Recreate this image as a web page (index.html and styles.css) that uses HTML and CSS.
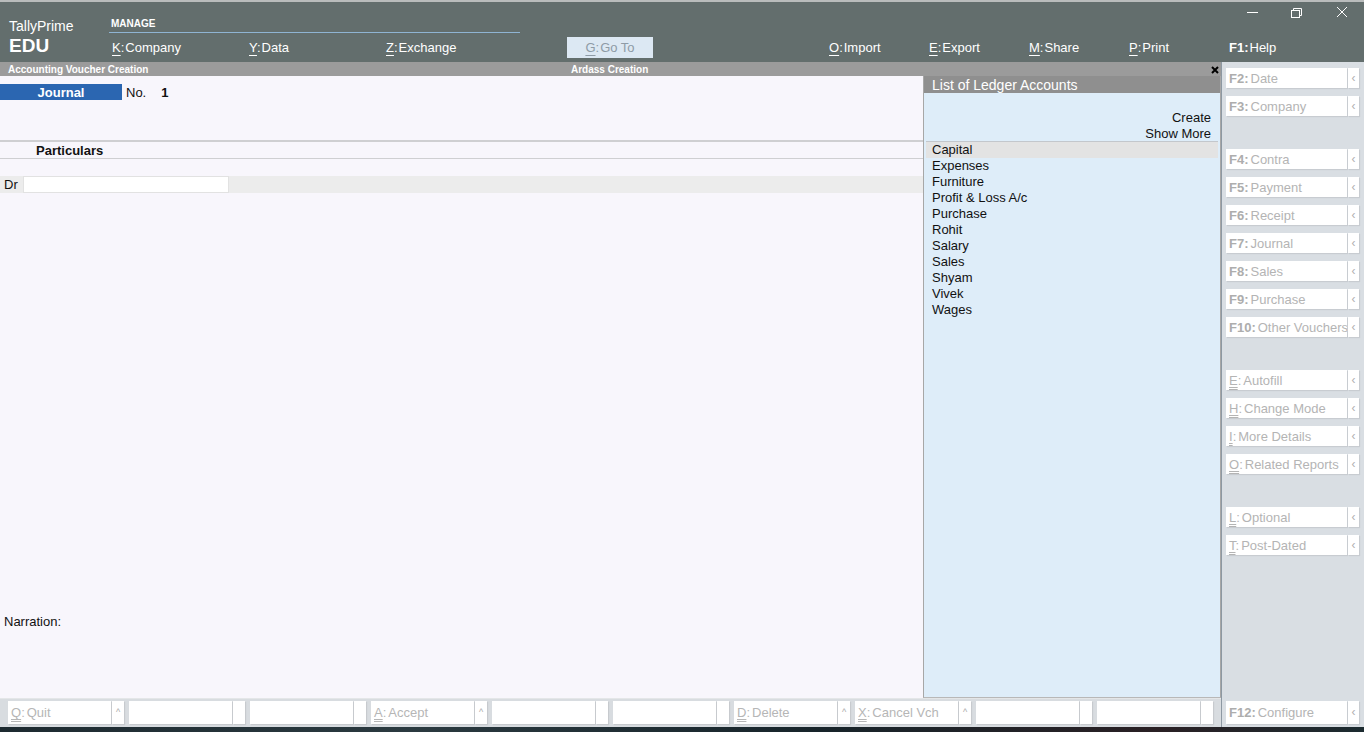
FILE: index.html
```html
<!DOCTYPE html>
<html>
<head>
<meta charset="utf-8">
<title>TallyPrime</title>
<link rel="stylesheet" href="styles.css">
</head>
<body>
<div class="app">
  <header class="topbar">
    <div class="brand">
      <div class="brand-name">TallyPrime</div>
      <div class="brand-edu">EDU</div>
    </div>
    <div class="nav">
      <div class="manage">MANAGE</div>
      <div class="menu">
        <span class="mi mi-k"><u>K</u>:<span class="lbl">Company</span></span>
        <span class="mi mi-y"><u>Y</u>:<span class="lbl">Data</span></span>
        <span class="mi mi-z"><u>Z</u>:<span class="lbl">Exchange</span></span>
        <span class="mi goto"><u>G</u>:<span class="lbl">Go To</span></span>
        <span class="mi mi-r first"><u>O</u>:<span class="lbl">Import</span></span>
        <span class="mi mi-r"><u>E</u>:<span class="lbl">Export</span></span>
        <span class="mi mi-r"><u>M</u>:<span class="lbl">Share</span></span>
        <span class="mi mi-r"><u>P</u>:<span class="lbl">Print</span></span>
        <span class="mi mi-r"><b>F1:</b><span class="lbl">Help</span></span>
      </div>
    </div>
    <svg class="winctl" width="134" height="30" viewBox="0 0 134 30">
      <line x1="17" y1="12.5" x2="28" y2="12.5" stroke="#fff" stroke-width="1"/>
      <rect x="61.5" y="10.5" width="8" height="7" fill="none" stroke="#fff" stroke-width="1"/>
      <path d="M63.5 10.5 V8.5 H71.5 V15.5 H69.5" fill="none" stroke="#fff" stroke-width="1"/>
      <path d="M107 7 L117 17 M117 7 L107 17" stroke="#fff" stroke-width="1"/>
    </svg>
  </header>

  <div class="work">
    <div class="leftcol">
      <div class="subbar">
        <span class="sb-title">Accounting Voucher Creation</span>
        <span class="sb-company">Ardass Creation</span>
        <svg class="sb-close" width="8" height="8" viewBox="0 0 8 8"><path d="M1 1 L7 7 M7 1 L1 7" stroke="#000" stroke-width="2"/></svg>
      </div>

      <div class="content">
        <section class="voucher">
          <div class="vhead">
            <span class="vtype">Journal</span>
            <span class="vno-label">No.</span>
            <span class="vno">1</span>
          </div>
          <div class="partic">Particulars</div>
          <div class="drrow">
            <span class="dr">Dr</span>
            <span class="drinput"></span>
          </div>
          <div class="narration">Narration:</div>
        </section>

        <aside class="ledger">
          <div class="lhead">List of Ledger Accounts</div>
          <div class="lactions">
            <div>Create</div>
            <div>Show More</div>
          </div>
          <ul class="litems">
            <li class="sel">Capital</li>
            <li>Expenses</li>
            <li>Furniture</li>
            <li>Profit &amp; Loss A/c</li>
            <li>Purchase</li>
            <li>Rohit</li>
            <li>Salary</li>
            <li>Sales</li>
            <li>Shyam</li>
            <li>Vivek</li>
            <li>Wages</li>
          </ul>
        </aside>
      </div>

      <div class="bottombar">
        <div class="slot"><span class="bmain"><u>Q</u>:<span class="lbl">Quit</span></span><span class="bbox">^</span></div>
        <div class="slot"><span class="bmain"></span><span class="bbox"></span></div>
        <div class="slot"><span class="bmain"></span><span class="bbox"></span></div>
        <div class="slot"><span class="bmain"><u>A</u>:<span class="lbl">Accept</span></span><span class="bbox">^</span></div>
        <div class="slot"><span class="bmain"></span><span class="bbox"></span></div>
        <div class="slot"><span class="bmain"></span><span class="bbox"></span></div>
        <div class="slot"><span class="bmain"><u>D</u>:<span class="lbl">Delete</span></span><span class="bbox">^</span></div>
        <div class="slot"><span class="bmain"><u>X</u>:<span class="lbl">Cancel Vch</span></span><span class="bbox">^</span></div>
        <div class="slot"><span class="bmain"></span><span class="bbox"></span></div>
        <div class="slot"><span class="bmain"></span><span class="bbox"></span></div>
      </div>
    </div>

    <nav class="sidebar">
      <div class="sgroup">
        <div class="sbtn"><span class="smain"><b>F2:</b><span class="lbl">Date</span></span><span class="sbox">&lsaquo;</span></div>
        <div class="sbtn"><span class="smain"><b>F3:</b><span class="lbl">Company</span></span><span class="sbox">&lsaquo;</span></div>
      </div>
      <div class="sgroup">
        <div class="sbtn"><span class="smain"><b>F4:</b><span class="lbl">Contra</span></span><span class="sbox">&lsaquo;</span></div>
        <div class="sbtn"><span class="smain"><b>F5:</b><span class="lbl">Payment</span></span><span class="sbox">&lsaquo;</span></div>
        <div class="sbtn"><span class="smain"><b>F6:</b><span class="lbl">Receipt</span></span><span class="sbox">&lsaquo;</span></div>
        <div class="sbtn"><span class="smain"><b>F7:</b><span class="lbl">Journal</span></span><span class="sbox">&lsaquo;</span></div>
        <div class="sbtn"><span class="smain"><b>F8:</b><span class="lbl">Sales</span></span><span class="sbox">&lsaquo;</span></div>
        <div class="sbtn"><span class="smain"><b>F9:</b><span class="lbl">Purchase</span></span><span class="sbox">&lsaquo;</span></div>
        <div class="sbtn"><span class="smain"><b>F10:</b><span class="lbl">Other Vouchers</span></span><span class="sbox">&lsaquo;</span></div>
      </div>
      <div class="sgroup">
        <div class="sbtn"><span class="smain"><u>E</u>:<span class="lbl">Autofill</span></span><span class="sbox">&lsaquo;</span></div>
        <div class="sbtn"><span class="smain"><u>H</u>:<span class="lbl">Change Mode</span></span><span class="sbox">&lsaquo;</span></div>
        <div class="sbtn"><span class="smain"><u>I</u>:<span class="lbl">More Details</span></span><span class="sbox">&lsaquo;</span></div>
        <div class="sbtn"><span class="smain"><u>O</u>:<span class="lbl">Related Reports</span></span><span class="sbox">&lsaquo;</span></div>
      </div>
      <div class="sgroup">
        <div class="sbtn"><span class="smain"><u>L</u>:<span class="lbl">Optional</span></span><span class="sbox">&lsaquo;</span></div>
        <div class="sbtn"><span class="smain"><u>T</u>:<span class="lbl">Post-Dated</span></span><span class="sbox">&lsaquo;</span></div>
      </div>
      <div class="sbtn sconfig"><span class="smain"><b>F12:</b><span class="lbl">Configure</span></span><span class="sbox">&lsaquo;</span></div>
    </nav>
  </div>

  <div class="taskbar"></div>
</div>
</body>
</html>
```

FILE: styles.css
```css
* { box-sizing: border-box; margin: 0; padding: 0; }
html, body { width: 1364px; height: 732px; overflow: hidden; }
body {
  font-family: "Liberation Sans", Arial, sans-serif;
  font-size: 13px;
  color: #111;
  background: #f8f6fc;
}
ul { list-style: none; }

.app { display: flex; flex-direction: column; width: 1364px; height: 732px; }

/* ---------- top bar ---------- */
.topbar {
  position: relative;
  flex: none;
  height: 62px;
  background: #636e6d;
  border-top: 2px solid #b9bcbc;
  display: flex;
  color: #fff;
}
.brand { width: 109px; padding-left: 9px; padding-top: 16px; flex: none; }
.brand-name { font-size: 14px; line-height: 16px; }
.brand-edu { font-size: 19px; font-weight: bold; line-height: 20px; margin-top: 2px; }

.nav { display: flex; flex-direction: column; }
.manage {
  width: 411px;
  height: 19px;
  margin-top: 12px;
  padding-left: 2px;
  padding-top: 1px;
  font-size: 10px;
  font-weight: bold;
  line-height: 18px;
  border-bottom: 1px solid #8fb4d3;
}
.menu { display: flex; height: 21px; margin-top: 4px; align-items: center; }
.mi { font-size: 13px; line-height: 22px; height: 21px; white-space: nowrap; }
.mi u { text-decoration: underline; text-underline-offset: 3px; }
.mi .lbl { margin-left: 1px; }
.mi-k { padding-left: 3px; width: 140px; }
.mi-y { width: 137px; }
.mi-z { width: 181px; }
.goto {
  width: 86px;
  background: #dce8f3;
  color: #8e9ba6;
  text-align: center;
}
.mi-r { width: 100px; }
.mi-r.first { margin-left: 176px; }

.winctl { position: absolute; top: -2px; right: 0; }

/* ---------- work area ---------- */
.work { display: flex; flex: 1; min-height: 0; }
.leftcol { width: 1221px; display: flex; flex-direction: column; flex: none; }

.subbar {
  height: 14px;
  flex: none;
  background: #9b9b9b;
  color: #fff;
  font-size: 10px;
  font-weight: bold;
  line-height: 15px;
  display: flex;
  align-items: center;
}
.sb-title { width: 571px; padding-left: 8px; }
.sb-company { flex: 1; }
.sb-close { margin-right: 2px; margin-top: 2px; }

.content { display: flex; height: 622px; flex: none; }

.voucher {
  width: 923px;
  background: #f8f6fc;
  display: flex;
  flex-direction: column;
  padding-top: 8px;
}
.vhead { display: flex; height: 16px; align-items: center; line-height: 17px; }
.vtype {
  width: 122px;
  height: 16px;
  background: #2b66b1;
  color: #fff;
  font-weight: bold;
  text-align: center;
}
.vno-label { margin-left: 4px; }
.vno { margin-left: 15px; font-weight: bold; }

.partic {
  margin-top: 40px;
  height: 19px;
  border-top: 2px solid #cfcfd2;
  border-bottom: 1px solid #cfcfd2;
  padding-left: 36px;
  font-weight: bold;
  line-height: 18px;
}
.drrow {
  margin-top: 17px;
  height: 17px;
  background: #ececec;
  display: flex;
  align-items: center;
}
.dr { width: 23px; padding-left: 4px; line-height: 17px; }
.drinput {
  width: 206px;
  height: 17px;
  background: #fff;
  border: 1px solid #e2e2e2;
}
.narration { margin-top: auto; margin-bottom: 68px; padding-left: 4px; line-height: 16px; }

.ledger {
  width: 298px;
  background: #deedf9;
  border-left: 1px solid #a7a7a7;
  border-right: 1px solid #a7a7a7;
  border-bottom: 1px solid #b8b8b8;
}
.lhead {
  height: 17px;
  background: #8f8f8f;
  color: #fff;
  font-size: 14px;
  line-height: 19px;
  padding-left: 8px;
}
.lactions {
  padding: 17px 7px 0 0;
  text-align: right;
  line-height: 16px;
  height: 49px;
  border-bottom: 1px solid #c3c7cc;
  margin: 0 2px;
}
.litems { margin: 0 2px; }
.litems li { line-height: 16px; padding-left: 6px; color: #111; }
.litems li.sel { background: #e3e3e3; }

/* ---------- bottom bar ---------- */
.bottombar {
  flex: none;
  height: 29px;
  background: #d8dce0;
  border-top: 1px solid #e4e6e8;
  padding: 2px 0 0 8px;
  display: flex;
}
.slot { display: flex; height: 23px; margin-right: 5px; }
.bmain, .bbox {
  background: #fff;
  height: 23px;
  color: #b6b6b6;
  line-height: 23px;
  box-shadow: 1px 1px 1px rgba(0,0,0,0.08);
}
.bmain { width: 103px; padding-left: 3px; white-space: nowrap; }
.bbox { width: 12px; margin-left: 1px; font-size: 9px; text-align: center; color: #a8a8a8; }
.bmain u, .smain u { text-decoration: underline double; text-underline-offset: 2px; }
.bmain .lbl, .smain .lbl { margin-left: 2px; }

/* ---------- sidebar ---------- */
.sidebar {
  width: 143px;
  flex: none;
  background: #d9dee3;
  border-left: 1px solid #8d98a2;
  padding: 6px 0 3px 4px;
  display: flex;
  flex-direction: column;
}
.sgroup { display: flex; flex-direction: column; gap: 8px; }
.sgroup + .sgroup { margin-top: 33px; }
.sbtn { display: flex; height: 20px; }
.smain, .sbox {
  background: #fff;
  height: 20px;
  line-height: 21px;
  color: #b4b4b4;
  box-shadow: 1px 1px 1px rgba(0,0,0,0.08);
}
.smain { width: 121px; padding-left: 3px; white-space: nowrap; overflow: hidden; }
.smain b { color: #adadad; }
.sbox { width: 11px; margin-left: 1px; text-align: center; font-size: 12px; color: #b0b0b0; }
.sconfig { margin-top: auto; height: 23px; }
.sconfig .smain, .sconfig .sbox { height: 23px; line-height: 23px; }

.taskbar {
  flex: none;
  height: 5px;
  background: linear-gradient(90deg, #1d2a30 0%, #2b3a40 30%, #17242a 60%, #2a2024 85%, #1c2b30 100%);
}
```
